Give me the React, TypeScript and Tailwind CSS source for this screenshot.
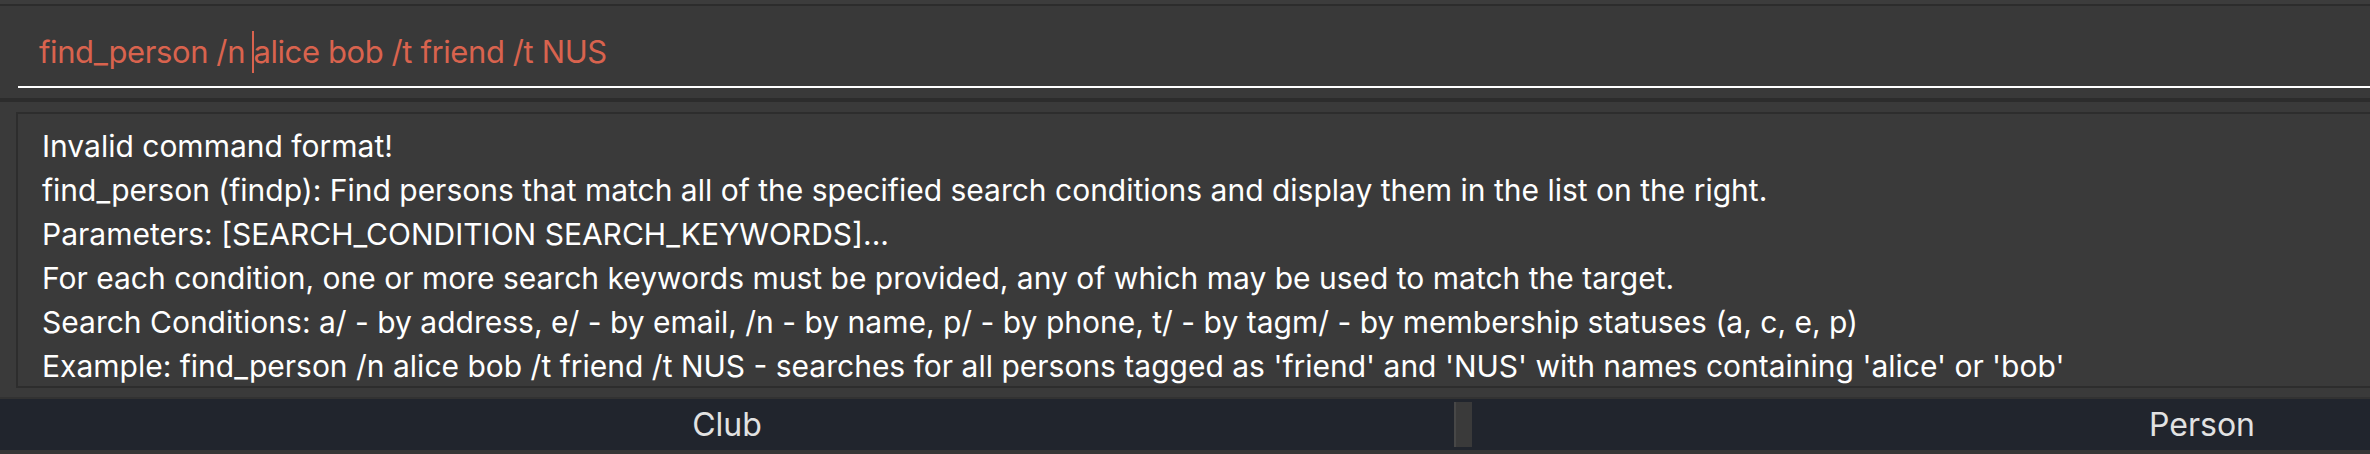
import React from 'react';

const lines = [
    "Invalid command format!",
    "find_person (findp): Find persons that match all of the specified search conditions and display them in the list on the right.",
    "Parameters: [SEARCH_CONDITION SEARCH_KEYWORDS]...",
    "For each condition, one or more search keywords must be provided, any of which may be used to match the target.",
    "Search Conditions: a/ - by address, e/ - by email, /n - by name, p/ - by phone, t/ - by tagm/ - by membership statuses (a, c, e, p)",
    "Example: find_person /n alice bob /t friend /t NUS - searches for all persons tagged as 'friend' and 'NUS' with names containing 'alice' or 'bob'",
];

const App = () => {
    return (
        <div className="w-[2370px] h-[454px] bg-[#3a3a3a] flex flex-col overflow-hidden font-['Inter',sans-serif]">
            {/* top strip */}
            <div className="h-[4px] bg-[#3c3c3c] shrink-0" />
            <div className="h-[2px] bg-[#2c2c2c] shrink-0" />

            {/* command box */}
            <div className="h-[92px] shrink-0 bg-[#393939] pl-[18px] flex flex-col">
                <div className="h-[80px] flex items-center pl-[21px] pt-[12px] text-[31px] text-[#d9634e] tracking-[-0.4px] whitespace-pre">
                    <span>find_person /n </span>
                    <span className="inline-block w-[2px] h-[42px] bg-[#d9634e] -mx-[1px]" />
                    <span>alice bob /t friend /t NUS</span>
                </div>
                <div className="h-[2px] bg-white" />
            </div>
            <div className="h-[4px] bg-[#2c2c2c] shrink-0" />

            {/* result display */}
            <div className="flex-1 min-h-0 pt-[10px] pb-[9px] pl-[16px] flex flex-col">
                <div className="flex-1 border-y-2 border-l-2 border-[#2d2d2d] bg-[#3a3a3a] pl-[24px] pt-[10px] text-[30px] leading-[44px] text-white whitespace-nowrap overflow-hidden">
                    {lines.map((l, i) => (
                        <div key={i}>{l}</div>
                    ))}
                </div>
            </div>
            <div className="h-[2px] bg-[#323232] shrink-0" />

            {/* tabs */}
            <div className="h-[51px] shrink-0 bg-[#21252d] flex overflow-hidden text-[#e2e2e2] text-[32px]">
                <div className="w-[1454px] shrink-0 flex items-center justify-center">Club</div>
                <div className="w-[18px] shrink-0 flex flex-col py-[3px]">
                    <div className="flex-1 bg-[#3a3a3a] border-l-2 border-[#474747]" />
                </div>
                <div className="w-[1460px] shrink-0 flex items-center justify-center">Person</div>
            </div>
            <div className="h-[4px] bg-[#363636] shrink-0" />
        </div>
    );
};

export default App;
